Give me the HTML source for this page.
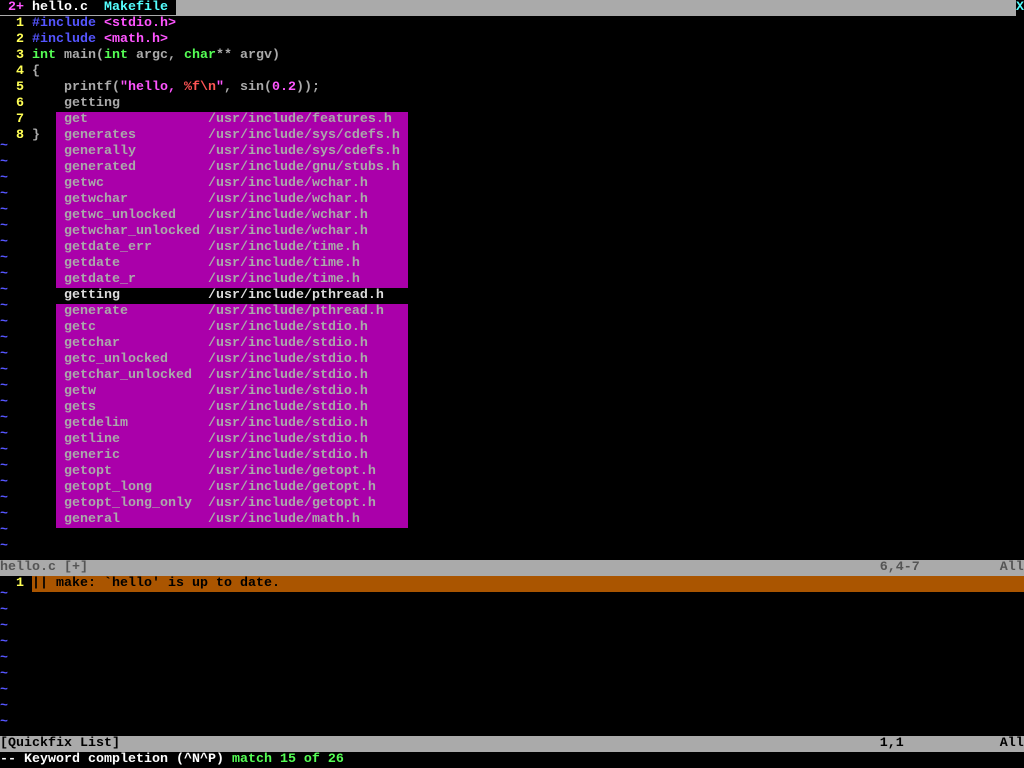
<!DOCTYPE html>
<html><head><meta charset="utf-8"><style>
html,body{margin:0;padding:0;background:#000;width:1024px;height:768px;overflow:hidden}
.r{position:absolute;left:0;height:16px;line-height:16px;font-family:"Liberation Mono",monospace;font-size:13.333px;font-weight:bold;white-space:pre;color:#aaaaaa}
.y{color:#ffff55}.b{color:#5555ff}.m{color:#ff55ff}.g{color:#55ff55}.rd{color:#ff5555}.w{color:#fff}.c{color:#55ffff}
.t{color:#5555ff;position:relative;top:-5px}
.pop{position:absolute;left:56px;width:352px;height:16px;background:#aa00aa}
.sel{background:#000;color:#dddddd}
</style></head><body>
<div class="r" style="top:0;width:1024px;background:#aaaaaa"><span style="background:#000"> <span class="m">2+</span> <span class="w">hello.c</span>  <span class="c">Makefile</span> </span></div>
<div class="r c" style="top:0;left:1016px;width:8px;background:#000">X</div>
<div class="r" style="top:16px"><span class="y">  1 </span><span class="b">#include</span> <span class="m">&lt;stdio.h&gt;</span></div>
<div class="r" style="top:32px"><span class="y">  2 </span><span class="b">#include</span> <span class="m">&lt;math.h&gt;</span></div>
<div class="r" style="top:48px"><span class="y">  3 </span><span class="g">int</span> main(<span class="g">int</span> argc, <span class="g">char</span>** argv)</div>
<div class="r" style="top:64px"><span class="y">  4 </span>{</div>
<div class="r" style="top:80px"><span class="y">  5 </span>    printf(<span class="m">"hello, </span><span class="rd">%f\n</span><span class="m">"</span>, sin(<span class="m">0.2</span>));</div>
<div class="r" style="top:96px"><span class="y">  6 </span>    getting</div>
<div class="r" style="top:112px"><span class="y">  7 </span></div>
<div class="r" style="top:128px"><span class="y">  8 </span>}</div>
<div id="tl"></div>
<div id="pp"></div>
<div class="r" style="top:560px;width:1024px;background:#aaaaaa;color:#555555">hello.c [+]                                                                                                   6,4-7          All</div>
<div class="r" style="top:576px;width:1024px"><span class="y">  1 </span><span style="background:#aa5500;color:#000;display:inline-block;width:992px">|| make: `hello' is up to date.</span></div>
<div id="tl2"></div>
<div class="r" style="top:736px;width:1024px;background:#aaaaaa;color:#000">[Quickfix List]                                                                                               1,1            All</div>
<div class="r" style="top:752px"><span class="w">-- Keyword completion (^N^P) </span><span class="g">match 15 of 26</span></div>
<script>
var h='';
for(var i=9;i<=34;i++)h+='<div class="r" style="top:'+(i*16)+'px"><span class="t">~</span></div>';
document.getElementById('tl').outerHTML=h;
h='';
for(var i=37;i<=45;i++)h+='<div class="r" style="top:'+(i*16)+'px"><span class="t">~</span></div>';
document.getElementById('tl2').outerHTML=h;
var items=[["get","features.h"],["generates","sys/cdefs.h"],["generally","sys/cdefs.h"],["generated","gnu/stubs.h"],["getwc","wchar.h"],["getwchar","wchar.h"],["getwc_unlocked","wchar.h"],["getwchar_unlocked","wchar.h"],["getdate_err","time.h"],["getdate","time.h"],["getdate_r","time.h"],["getting","pthread.h"],["generate","pthread.h"],["getc","stdio.h"],["getchar","stdio.h"],["getc_unlocked","stdio.h"],["getchar_unlocked","stdio.h"],["getw","stdio.h"],["gets","stdio.h"],["getdelim","stdio.h"],["getline","stdio.h"],["generic","stdio.h"],["getopt","getopt.h"],["getopt_long","getopt.h"],["getopt_long_only","getopt.h"],["general","math.h"]];
h='';
for(var i=0;i<items.length;i++){var w=items[i][0];while(w.length<18)w+=' ';
h+='<div class="r pop'+(i==11?' sel':'')+'" style="top:'+(112+i*16)+'px"> '+w+'/usr/include/'+items[i][1]+'</div>';}
document.getElementById('pp').outerHTML=h;
</script>
</body></html>
